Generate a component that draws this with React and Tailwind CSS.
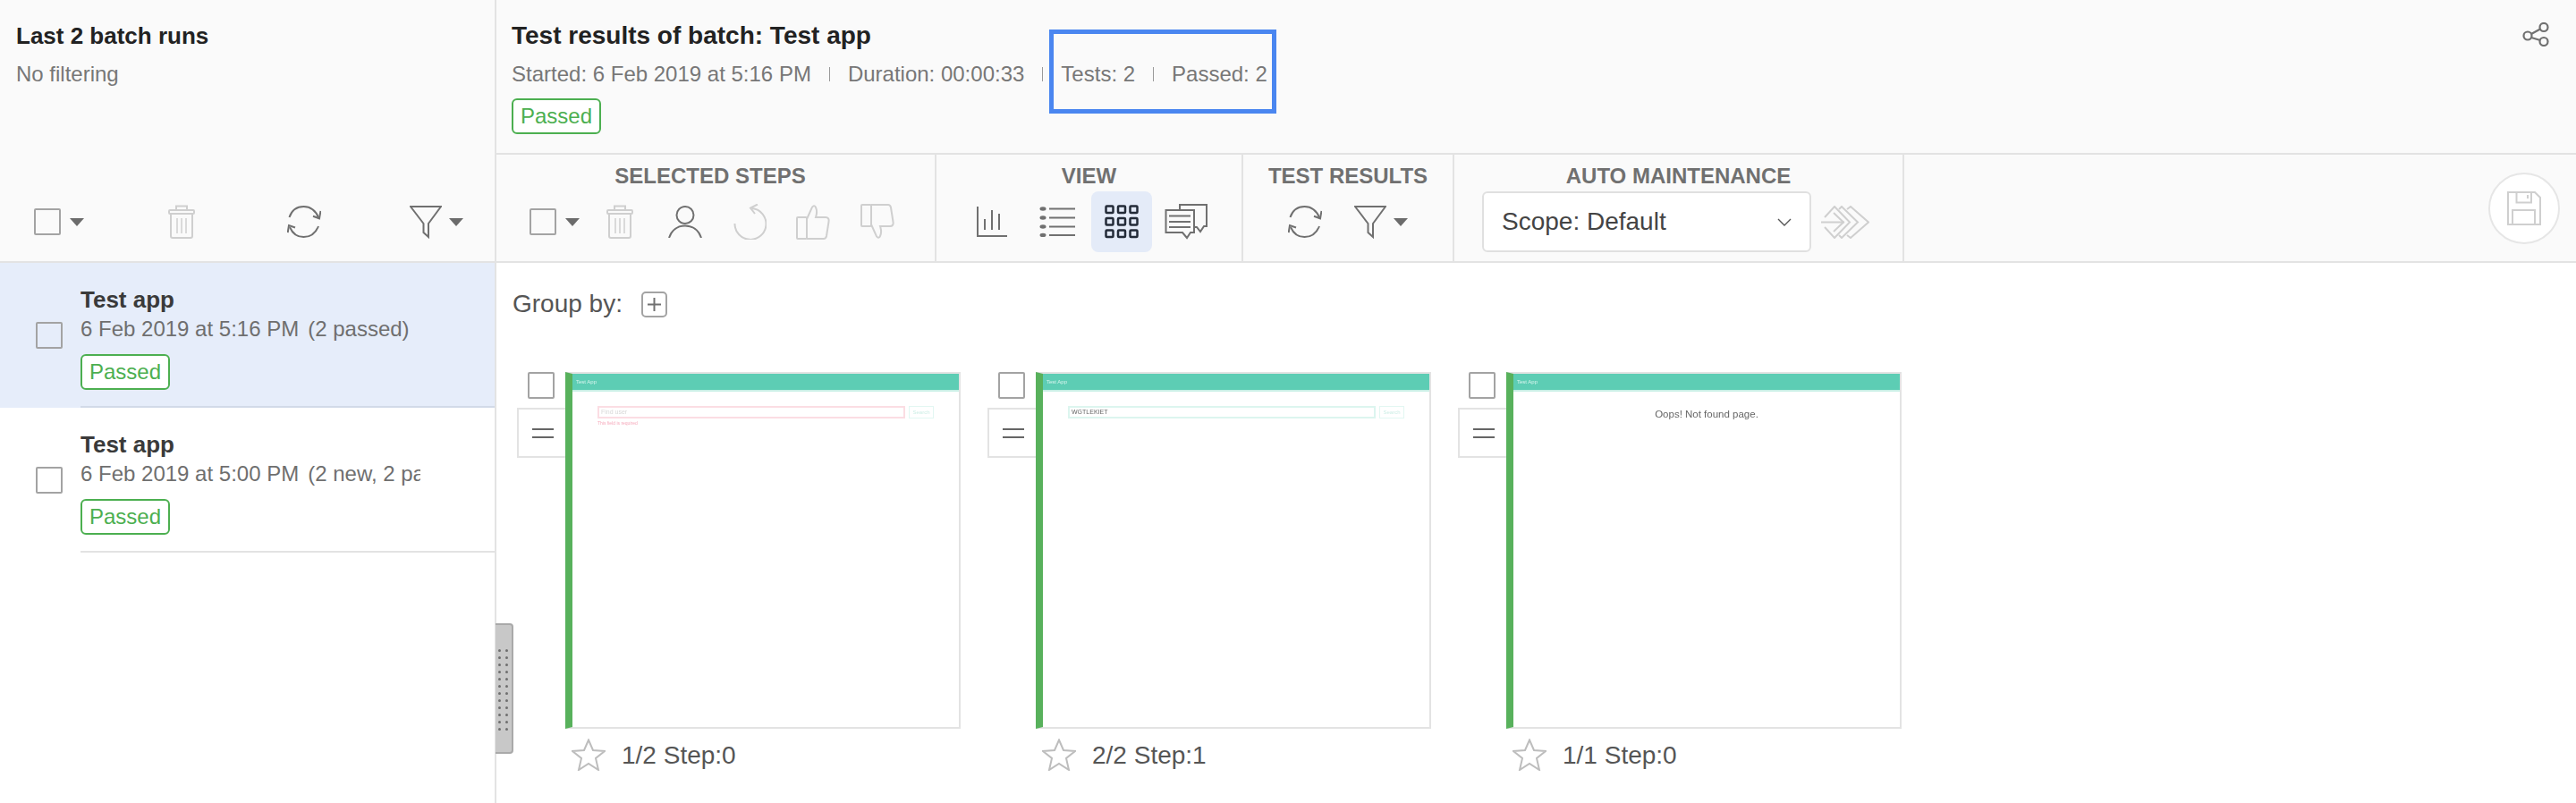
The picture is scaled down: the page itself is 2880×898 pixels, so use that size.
import React from 'react'

const Caret = () => (
  <svg width="16" height="9" viewBox="0 0 16 9" className="shrink-0">
    <path d="M0 0h16L8 9z" fill="#6b6b6b" />
  </svg>
)

const Checkbox = () => (
  <div className="w-[30px] h-[30px] shrink-0 border-2 border-[#a3a3a3] rounded-[2px]" />
)

const Badge = () => (
  <div className="w-[100px] h-[40px] flex items-center justify-center bg-white border-2 border-[#4caf50] rounded-[6px] text-[24px] text-[#4caf50]">
    Passed
  </div>
)

const TrashIcon = () => (
  <svg width="30" height="38" viewBox="0 0 30 38" fill="none" stroke="#cfcfcf" strokeWidth="2" className="shrink-0">
    <path d="M9 6V1.5h12V6" />
    <rect x="1" y="6" width="28" height="4" rx="1" />
    <path d="M3 10v25a2 2 0 0 0 2 2h20a2 2 0 0 0 2-2V10" />
    <path d="M10 15v17M15 15v17M20 15v17" strokeWidth="1.5" />
  </svg>
)

const RefreshIcon = () => (
  <svg width="38" height="36" viewBox="0 0 38 36" fill="none" stroke="#707070" strokeWidth="2" className="shrink-0">
    <path d="M2.5 13C5 5.5 11 1 18.5 1S32 5.5 35.5 14" />
    <path d="M37.5 6L36 14.3L29 11.7" />
    <path d="M35 23C32 30.5 26 35 18.5 35S6 31 3 24" />
    <path d="M0.7 30L2 22L9 24.5" />
  </svg>
)

const FilterIcon = () => (
  <svg width="36" height="37" viewBox="0 0 36 37" fill="none" stroke="#707070" strokeWidth="2" className="shrink-0">
    <path d="M1 1H35L21 20V35L15.5 30V20Z" />
  </svg>
)

const PersonIcon = () => (
  <svg width="38" height="36" viewBox="0 0 38 36" fill="none" stroke="#707070" strokeWidth="2" className="shrink-0">
    <circle cx="19" cy="10.5" r="9.5" />
    <path d="M1 36C4 27 11 22.5 19 22.5S34 27 37 36" />
  </svg>
)

const UndoIcon = () => (
  <svg width="37" height="40" viewBox="0 0 37 40" fill="none" stroke="#cfcfcf" strokeWidth="2" className="shrink-0">
    <path d="M1.5 22A17.5 17.5 0 1 0 21 5" />
    <path d="M27 0.5L19 4.5L24 11" />
  </svg>
)

const thumbPath = 'M12 17L17 6C18 2 21 1 22 4C24 8 23 12 22 15H33C36 15 37 17 36.5 20L34 36C33.5 38 33 39 31 39H12'

const ThumbUpIcon = () => (
  <svg width="39" height="40" viewBox="0 0 39 40" fill="none" stroke="#cfcfcf" strokeWidth="2" className="shrink-0">
    <rect x="1" y="15" width="11" height="24" rx="1" />
    <path d={thumbPath} />
  </svg>
)

const ThumbDownIcon = () => (
  <svg width="39" height="40" viewBox="0 0 39 40" fill="none" stroke="#cfcfcf" strokeWidth="2" className="shrink-0">
    <g transform="translate(0 40) scale(1 -1)">
      <rect x="1" y="15" width="11" height="24" rx="1" />
      <path d={thumbPath} />
    </g>
  </svg>
)

const ChartIcon = () => (
  <svg width="36" height="34" viewBox="0 0 36 34" fill="none" stroke="#707070" strokeWidth="2" className="shrink-0">
    <path d="M2 0V33H35" />
    <path d="M10 14V26M18 4V26M26 8V26" />
  </svg>
)

const ListIcon = () => (
  <svg width="41" height="34" viewBox="0 0 41 34" fill="none" stroke="#707070" strokeWidth="2" className="shrink-0">
    {[2.5, 12.5, 22.5, 32].map((y) => (
      <g key={y}>
        <ellipse cx="4" cy={y} rx="3.5" ry="2.2" fill="#707070" stroke="none" />
        <path d={`M11 ${y}H40`} />
      </g>
    ))}
  </svg>
)

const GridIcon = () => (
  <svg width="38" height="38" viewBox="0 0 38 38" fill="none" stroke="#232b38" strokeWidth="2.5" className="shrink-0">
    {[1.5, 15, 28.5].map((y) =>
      [1.5, 15, 28.5].map((x) => <rect key={`${x}-${y}`} x={x} y={y} width="8" height="7.5" rx="1" />)
    )}
  </svg>
)

const CommentsIcon = () => (
  <svg width="48" height="40" viewBox="0 0 48 40" fill="none" stroke="#707070" strokeWidth="2" className="shrink-0">
    <path d="M1.5 7H33V32H29L25 38L20 32H1.5Z" />
    <path d="M17 7V1H47V25H44L40 31L36 26H33" />
    <path d="M5 13.5H29M5 20H29M5 26H29" />
  </svg>
)

const ArrowsIcon = () => (
  <svg width="54" height="37" viewBox="0 0 54 37" fill="none" stroke="#cfcfcf" strokeWidth="2" className="shrink-0">
    <path d="M0 18.5H26" />
    <path d="M14 8L25 18.5L14 29" />
    <path d="M4 13L15 1L32 18.5L15 36L4 24" />
    <path d="M20 4L23 1L41 18.5L23 36L20 33" />
    <path d="M29 4L33 1L53 18.5L33 36L29 33" />
  </svg>
)

const ShareIcon = () => (
  <svg width="30" height="27" viewBox="0 0 30 27" fill="none" stroke="#707070" strokeWidth="2.2" className="shrink-0">
    <circle cx="6" cy="15" r="4.5" />
    <circle cx="24" cy="5.5" r="4.5" />
    <circle cx="24" cy="21.5" r="4.5" />
    <path d="M10 13L20 7.5M10 17L20 20" />
  </svg>
)

const SaveIcon = () => (
  <svg width="38" height="38" viewBox="0 0 38 38" fill="none" stroke="#cfcfcf" strokeWidth="2">
    <path d="M1 1H31L37 7V37H1Z" />
    <path d="M10.5 1V12.5H27V1M23 4V8M6 37V21H31V37" />
  </svg>
)

const StarIcon = () => (
  <svg width="38" height="36" viewBox="0 0 38 36" fill="none" stroke="#bdbdbd" strokeWidth="2" className="shrink-0">
    <path d="M19 1.5L24 13L37 14L27 22L30 35L19 28L8 35L11 22L1 14L14 13Z" />
  </svg>
)

const Sep = () => <span className="mx-[20px] w-px h-[16px] bg-[#999]" />

function Section({ title, width, titleClass, children }) {
  return (
    <div className="flex flex-col shrink-0 border-r-2 border-[#e3e3e3] pt-[10px]" style={{ width }}>
      <div className={`text-[24px] leading-[28px] font-bold text-center text-[#707070] ${titleClass || ''}`}>{title}</div>
      <div className="h-[68px] mt-[3px] flex items-center">{children}</div>
    </div>
  )
}

function RunRow({ date, result, active }) {
  return (
    <div className={`h-[162px] flex items-center ${active ? 'bg-[#e6edfa]' : 'bg-white'}`}>
      <div className="ml-[40px] mr-[20px]">
        <Checkbox />
      </div>
      <div className={`h-full flex-1 min-w-0 pt-[25px] border-b-2 ${active ? 'border-[#d2dae8]' : 'border-[#e3e3e3]'}`}>
        <div className="text-[26px] leading-[32px] font-bold text-[#3a3a3a]">Test app</div>
        <div className="mt-[2px] w-[380px] overflow-hidden whitespace-nowrap flex gap-[10px] text-[24px] leading-[30px] text-[#6f6f6f]">
          <span>{date}</span>
          <span>{result}</span>
        </div>
        <div className="mt-[13px]">
          <Badge />
        </div>
      </div>
    </div>
  )
}

function Thumb({ children }) {
  return (
    <div className="w-[442px] h-[399px] shrink-0 bg-white border-2 border-[#e3e3e3] border-l-[8px] border-l-[#58b15c] overflow-hidden">
      <div className="h-[20px] bg-[#5dcdb4] border-b-2 border-[#c9f0e6] pl-[4px] text-[6px] leading-[18px] text-[#d8f5ee] blur-[0.4px]">
        Test App
      </div>
      {children}
    </div>
  )
}

function SearchForm({ value, border, color, error }) {
  return (
    <div className="pt-[16px] pl-[28px] blur-[0.4px]">
      <div className="flex gap-[4px]">
        <div className={`w-[344px] h-[14px] border-2 ${border} text-[7px] leading-[10px] pl-[2px] ${color}`}>{value}</div>
        <div className="w-[28px] h-[14px] border border-[#e2f7f2] text-[6px] leading-[12px] text-center text-[#cdeee6]">Search</div>
      </div>
      {error && <div className="mt-[1px] text-[5px] leading-[8px] text-[#f6a9bb]">{error}</div>}
    </div>
  )
}

function Card({ label, children }) {
  return (
    <div className="w-[496px] shrink-0">
      <div className="flex">
        <div className="w-[54px] shrink-0">
          <div className="ml-[12px]">
            <Checkbox />
          </div>
          <div className="mt-[10px] h-[56px] border-2 border-r-0 border-[#e3e3e3] flex flex-col items-center justify-center gap-[7px] pl-[2px]">
            <div className="w-[24px] h-[2px] bg-[#666]" />
            <div className="w-[24px] h-[2px] bg-[#666]" />
          </div>
        </div>
        <Thumb>{children}</Thumb>
      </div>
      <div className="mt-[10px] ml-[61px] flex items-center gap-[18px]">
        <StarIcon />
        <span className="pt-[2px] text-[28px] leading-[36px] text-[#555]">{label}</span>
      </div>
    </div>
  )
}

export default function App() {
  return (
    <div className="w-[2880px] h-[898px] overflow-hidden flex bg-white font-['Liberation_Sans',sans-serif]">
      {/* Batch runs */}
      <aside className="w-[555px] shrink-0 border-r-2 border-[#e3e3e3]">
        <div className="h-[294px] flex flex-col bg-[#fafafa] border-b-2 border-[#e3e3e3]">
          <div className="pt-[24px] pl-[18px] text-[26px] leading-[32px] font-bold text-[#222]">Last 2 batch runs</div>
          <div className="mt-[12px] pl-[18px] text-[24px] leading-[30px] text-[#777]">No filtering</div>
          <div className="mt-auto mb-[24px] h-[40px] pl-[38px] flex items-center">
            <Checkbox />
            <div className="ml-[10px]"><Caret /></div>
            <div className="ml-[94px]"><TrashIcon /></div>
            <div className="ml-[103px]"><RefreshIcon /></div>
            <div className="ml-[99px]"><FilterIcon /></div>
            <div className="ml-[8px]"><Caret /></div>
          </div>
        </div>
        <RunRow active date="6 Feb 2019 at 5:16 PM" result="(2 passed)" />
        <RunRow date="6 Feb 2019 at 5:00 PM" result="(2 new, 2 passed)" />
      </aside>

      {/* Test results */}
      <main className="relative flex-1 min-w-0">
        <div className="relative h-[173px] flex justify-between bg-[#fafafa] border-b-2 border-[#e3e3e3]">
          <div className="pl-[17px]">
            <div className="pt-[24px] text-[28px] leading-[32px] font-bold text-[#222]">Test results of batch: Test app</div>
            <div className="mt-[12px] flex items-center text-[24px] leading-[30px] text-[#777]">
              <span>Started: 6 Feb 2019 at 5:16 PM</span>
              <Sep />
              <span>Duration: 00:00:33</span>
              <Sep />
              <span>Tests: 2</span>
              <Sep />
              <span>Passed: 2</span>
            </div>
            <div className="mt-[12px]">
              <Badge />
            </div>
          </div>
          <div className="mt-[25px] mr-[30px]">
            <ShareIcon />
          </div>
          <div className="absolute left-[618px] top-[33px] w-[254px] h-[94px] border-[5px] border-[#4a86f0]" />
        </div>

        <div className="h-[121px] flex bg-[#fafafa] border-b-2 border-[#e3e3e3]">
          <Section title="SELECTED STEPS" width={492} titleClass="pr-[12px]">
            <div className="pl-[37px] flex items-center">
              <Checkbox />
              <div className="ml-[10px]"><Caret /></div>
              <div className="ml-[30px]"><TrashIcon /></div>
              <div className="ml-[39px]"><PersonIcon /></div>
              <div className="ml-[35px]"><UndoIcon /></div>
              <div className="ml-[33px]"><ThumbUpIcon /></div>
              <div className="ml-[33px]"><ThumbDownIcon /></div>
            </div>
          </Section>
          <Section title="VIEW" width={343}>
            <div className="pl-[44px] flex items-center">
              <ChartIcon />
              <div className="ml-[35px]"><ListIcon /></div>
              <div className="ml-[17px] w-[68px] h-[68px] flex items-center justify-center rounded-[8px] bg-[#e4ebf8]">
                <GridIcon />
              </div>
              <div className="ml-[14px]"><CommentsIcon /></div>
            </div>
          </Section>
          <Section title="TEST RESULTS" width={236}>
            <div className="pl-[50px] flex items-center">
              <RefreshIcon />
              <div className="ml-[36px]"><FilterIcon /></div>
              <div className="ml-[8px]"><Caret /></div>
            </div>
          </Section>
          <Section title="AUTO MAINTENANCE" width={503}>
            <div className="pl-[31px] flex items-center">
              <div className="w-[368px] h-[68px] px-[20px] flex items-center justify-between bg-white border-2 border-[#e0e0e0] rounded-[6px] text-[28px] text-[#444]">
                <span>Scope: Default</span>
                <svg width="16" height="9" viewBox="0 0 16 9" fill="none" stroke="#555" strokeWidth="1.4">
                  <path d="M1 1L8 8L15 1" />
                </svg>
              </div>
              <div className="ml-[11px]"><ArrowsIcon /></div>
            </div>
          </Section>
          <div className="ml-auto mr-[18px] self-center w-[80px] h-[80px] flex items-center justify-center rounded-full bg-white border-2 border-[#e6e6e6]">
            <SaveIcon />
          </div>
        </div>

        <div className="pt-[29px] pl-[18px] flex items-center text-[28px] leading-[34px] text-[#555]">
          <span>Group by:</span>
          <div className="ml-[21px] w-[29px] h-[29px] flex items-center justify-center border-2 border-[#a3a3a3] rounded-[5px]">
            <svg width="15" height="15" viewBox="0 0 15 15" stroke="#707070" strokeWidth="2">
              <path d="M7.5 0V15M0 7.5H15" />
            </svg>
          </div>
        </div>

        <div className="mt-[59px] pl-[23px] flex gap-[30px]">
          <Card label="1/2 Step:0">
            <SearchForm value="Find user" border="border-[#fbdde3]" color="text-[#d8d8d8]" error="This field is required" />
          </Card>
          <Card label="2/2 Step:1">
            <SearchForm value="WGTLEKIET" border="border-[#dcf5ef]" color="text-[#666]" />
          </Card>
          <Card label="1/1 Step:0">
            <div className="pt-[16px] text-center text-[11.5px] leading-[18px] text-[#666] blur-[0.5px]">Oops! Not found page.</div>
          </Card>
        </div>

        {/* Splitter handle */}
        <div className="absolute left-[-1px] top-[697px] w-[20px] h-[146px] pt-[27px] pl-[3px] bg-[#c8c8c8] border-r-2 border-y-2 border-[#a9a9a9] rounded-r-[4px]">
          <div className="grid grid-cols-[repeat(2,3px)] auto-rows-[3px] gap-x-[5px] gap-y-[5px]">
            {Array.from({ length: 24 }).map((_, i) => (
              <div key={i} className="rounded-full bg-[#6f6f6f]" />
            ))}
          </div>
        </div>
      </main>
    </div>
  )
}
